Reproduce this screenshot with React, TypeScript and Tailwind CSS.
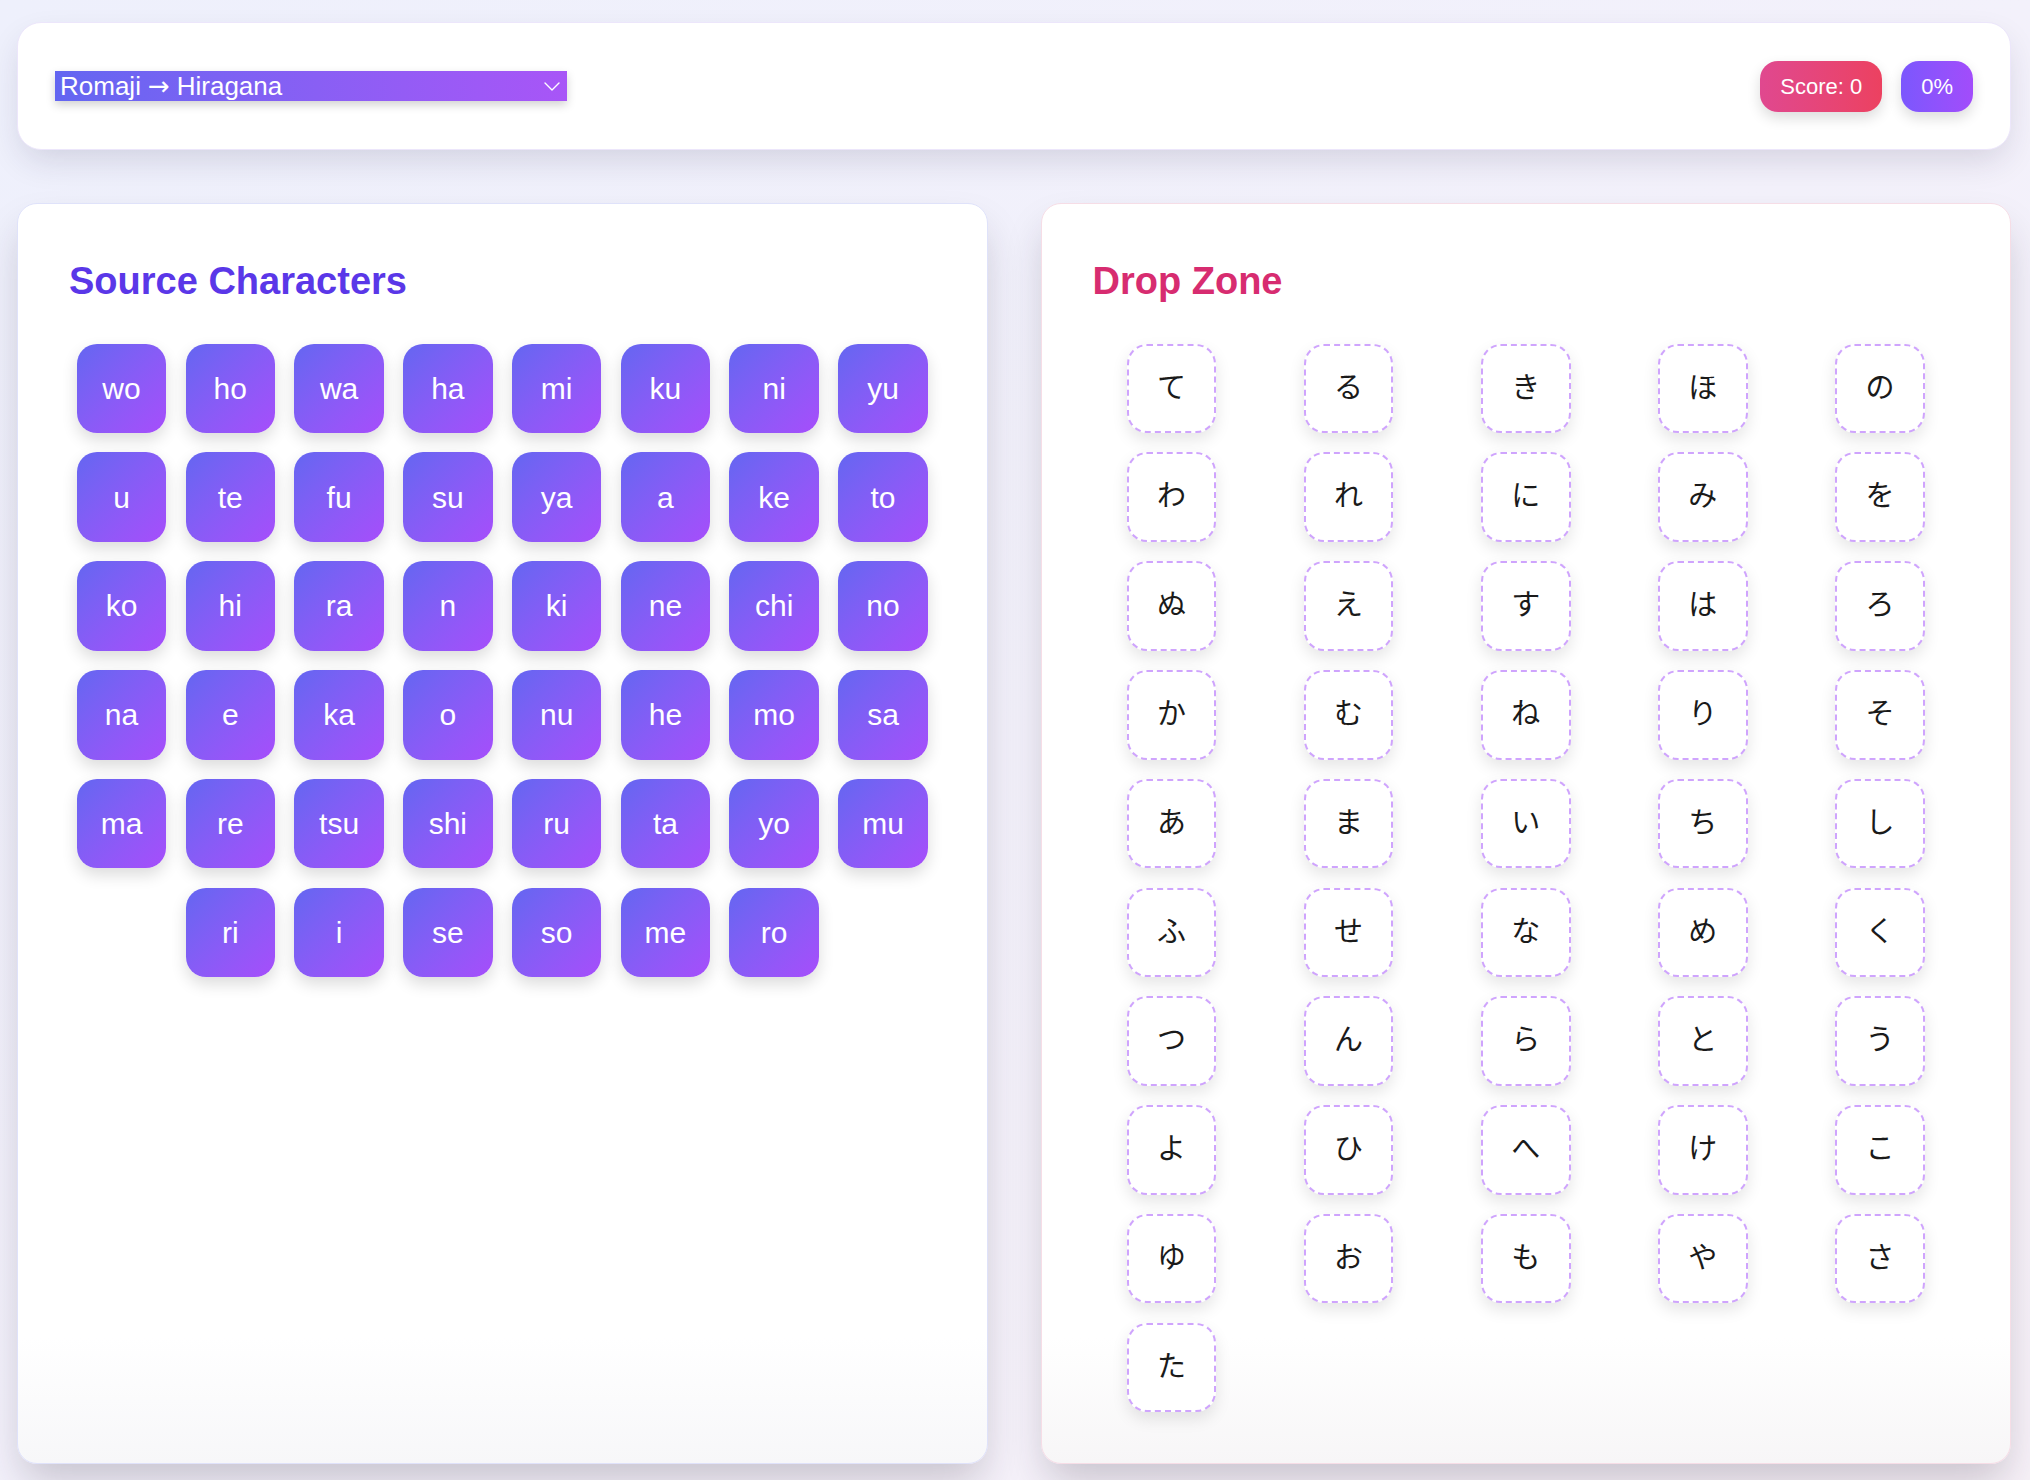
import React, { useState } from 'react';

const sourceChars = [
    'wo', 'ho', 'wa', 'ha', 'mi', 'ku', 'ni', 'yu',
    'u', 'te', 'fu', 'su', 'ya', 'a', 'ke', 'to',
    'ko', 'hi', 'ra', 'n', 'ki', 'ne', 'chi', 'no',
    'na', 'e', 'ka', 'o', 'nu', 'he', 'mo', 'sa',
    'ma', 're', 'tsu', 'shi', 'ru', 'ta', 'yo', 'mu',
    'ri', 'i', 'se', 'so', 'me', 'ro',
];

const dropChars = [
    'て', 'る', 'き', 'ほ', 'の',
    'わ', 'れ', 'に', 'み', 'を',
    'ぬ', 'え', 'す', 'は', 'ろ',
    'か', 'む', 'ね', 'り', 'そ',
    'あ', 'ま', 'い', 'ち', 'し',
    'ふ', 'せ', 'な', 'め', 'く',
    'つ', 'ん', 'ら', 'と', 'う',
    'よ', 'ひ', 'へ', 'け', 'こ',
    'ゆ', 'お', 'も', 'や', 'さ',
    'た',
];

const modes = [
    { from: 'Romaji', to: 'Hiragana' },
    { from: 'Hiragana', to: 'Romaji' },
    { from: 'Romaji', to: 'Katakana' },
    { from: 'Katakana', to: 'Romaji' },
];

export default function App() {
    const [modeIndex, setModeIndex] = useState(0);
    const mode = modes[modeIndex];
    const score = 0;
    const progress = 0;

    return (
        <div
            className="h-screen flex flex-col pl-[17px] pr-[19px] pt-[22px] pb-4 bg-linear-to-br from-[#eef0fc] via-[#f3f1fb] to-[#f7f1f8] overflow-hidden"
            style={{ fontFamily: '"Liberation Sans", "Noto Sans CJK JP", sans-serif' }}
        >
            {/* 상단: 모드 선택 + 점수 */}
            <div className="h-[128px] shrink-0 flex items-center justify-between px-[37px] bg-white border border-[#ece6fb] rounded-3xl shadow-[0_14px_34px_-6px_rgba(40,30,70,0.16)]">
                <button
                    onClick={() => setModeIndex((modeIndex + 1) % modes.length)}
                    className="w-[512px] h-[30px] pl-[5px] pr-[7px] flex items-center justify-between text-[26px] leading-none text-white bg-linear-to-r from-[#6366f1] to-[#a855f7] shadow-[0_4px_10px_rgba(0,0,0,0.18)] cursor-pointer"
                >
                    <span className="flex items-center">
                        {mode.from}
                        <span className="mx-[7px]" style={{ fontFamily: '"DejaVu Sans", sans-serif' }}>→</span>
                        {mode.to}
                    </span>
                    <svg width="16" height="9" viewBox="0 0 16 9" fill="none">
                        <path d="M1 1L8 8L15 1" stroke="white" strokeWidth="1.4" strokeLinecap="round" strokeLinejoin="round" />
                    </svg>
                </button>

                <div className="flex items-center gap-[19px]">
                    <div className="h-[51px] px-5 flex items-center rounded-[18px] text-[22px] text-white bg-linear-to-r from-[#e0488f] to-[#ec4160] shadow-[0_6px_14px_rgba(0,0,0,0.14)]">
                        Score: {score}
                    </div>
                    <div className="h-[51px] px-5 flex items-center rounded-[18px] text-[22px] text-white bg-linear-to-r from-[#7b57fd] to-[#a24cfb] shadow-[0_6px_14px_rgba(0,0,0,0.14)]">
                        {progress}%
                    </div>
                </div>
            </div>

            <div className="flex-1 min-h-0 mt-[53px] grid grid-cols-2 gap-[53px]">
                {/* 왼쪽: 로마자 카드 */}
                <div className="p-[51px] rounded-[20px] border border-[#dfe2fa] bg-linear-to-b from-white from-90% to-[#f7f7f9] shadow-[0_22px_40px_-6px_rgba(40,30,50,0.22)]">
                    <h2 className="mt-[4px] text-[38px] leading-[1.2] font-bold text-[#5a37e8] mb-[39px]">Source Characters</h2>
                    <div className="flex flex-wrap justify-center gap-[19.2px]">
                        {sourceChars.map((ch) => (
                            <button
                                key={ch}
                                className="w-[89.6px] h-[89.6px] rounded-[20px] flex items-center justify-center text-[30px] text-white bg-linear-to-br from-[#6366f1] to-[#a64dfb] shadow-[0_7px_16px_rgba(0,0,0,0.14)] cursor-grab"
                            >
                                {ch}
                            </button>
                        ))}
                    </div>
                </div>

                {/* 오른쪽: 드롭 영역 */}
                <div className="p-[51px] rounded-[20px] border border-[#f6dde6] bg-linear-to-b from-white from-90% to-[#f7f6f7] shadow-[0_22px_40px_-6px_rgba(40,30,50,0.22)]">
                    <h2 className="mt-[4px] text-[38px] leading-[1.2] font-bold text-[#d72c70] mb-[39px]">Drop Zone</h2>
                    <div className="grid grid-cols-5 gap-[19.2px] justify-items-center">
                        {dropChars.map((ch) => (
                            <div
                                key={ch}
                                className="w-[89.6px] h-[89.6px] rounded-[20px] flex items-center justify-center bg-white border-2 border-dashed border-[#cfa4fd] text-[29px] text-[#1a1a1a] shadow-[0_7px_16px_rgba(0,0,0,0.1)]"
                            >
                                {ch}
                            </div>
                        ))}
                    </div>
                </div>
            </div>
        </div>
    );
}
